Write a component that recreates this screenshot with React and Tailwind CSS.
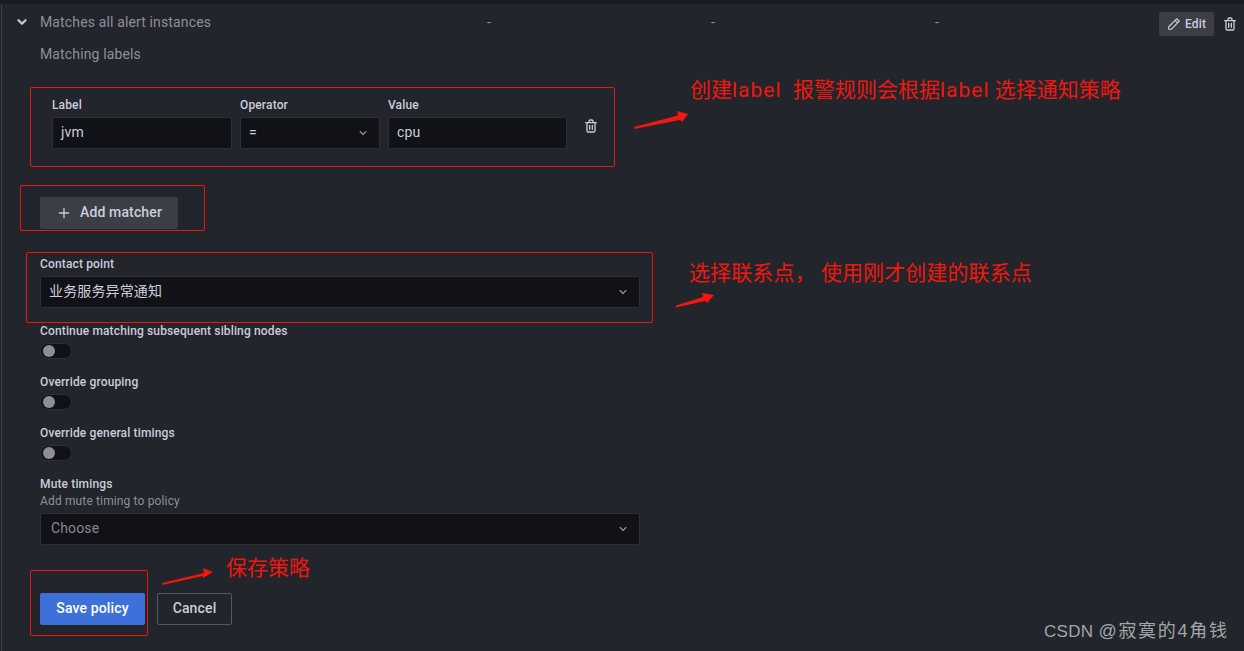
const TRASH = "M10,18a1,1,0,0,0,1-1V11a1,1,0,0,0-2,0v6A1,1,0,0,0,10,18ZM20,6H16V5a3,3,0,0,0-3-3H11A3,3,0,0,0,8,5V6H4A1,1,0,0,0,4,8H5V19a3,3,0,0,0,3,3h8a3,3,0,0,0,3-3V8h1a1,1,0,0,0,0-2ZM10,5a1,1,0,0,1,1-1h2a1,1,0,0,1,1,1V6H10Zm7,14a1,1,0,0,1-1,1H8a1,1,0,0,1-1-1V8H17Zm-3-1a1,1,0,0,0,1-1V11a1,1,0,0,0-2,0v6A1,1,0,0,0,14,18Z";
const PEN = "M22,7.24a1,1,0,0,0-.29-.71L17.47,2.29A1,1,0,0,0,16.76,2a1,1,0,0,0-.71.29L13.22,5.12h0L2.29,16.05a1,1,0,0,0-.29.71V21a1,1,0,0,0,1,1H7.24A1,1,0,0,0,8,21.71L18.87,10.78h0L21.71,8a1.19,1.19,0,0,0,.22-.33,1,1,0,0,0,0-.24.7.7,0,0,0,0-.14ZM6.83,20H4V17.17l9.93-9.93,2.83,2.83ZM18.17,8.66,15.34,5.83l1.42-1.41,2.82,2.82Z";
const ANGLE = "M17,9.17a1,1,0,0,0-1.41,0L12,12.71,8.46,9.17a1,1,0,0,0-1.41,0,1,1,0,0,0,0,1.42l4.24,4.24a1,1,0,0,0,1.42,0L17,10.59A1,1,0,0,0,17,9.17Z";
const PLUS = "M19,11H13V5a1,1,0,0,0-2,0v6H5a1,1,0,0,0,0,2h6v6a1,1,0,0,0,2,0V13h6a1,1,0,0,0,0-2Z";

function Icon({ d, className }) {
  return (
    <svg viewBox="0 0 24 24" fill="currentColor" className={className}>
      <path d={d} />
    </svg>
  );
}

function FieldLabel({ children, className = "" }) {
  return <div className={`h-4 text-xs leading-4 font-medium tracking-[0.14px] text-[#ccccdc] ${className}`}>{children}</div>;
}

function Input({ children, className = "" }) {
  return (
    <div className={`flex h-8 items-center border border-[#2d2f35] bg-[#111217] px-2 pb-[2px] text-sm tracking-[0.14px] text-[#ccccdc] rounded-[2px] ${className}`}>
      {children}
    </div>
  );
}

function Select({ children, className = "", muted = false }) {
  return (
    <div className={`flex h-8 items-center justify-between border border-[#2d2f35] bg-[#111217] pr-2 text-sm tracking-[0.14px] rounded-[2px] ${muted ? "pl-[10px] text-[rgba(204,204,220,0.65)]" : "pl-2 text-[#ccccdc]"} ${className}`}>
      <span className="pb-[2px]">{children}</span>
      <Icon d={ANGLE} className="h-4 w-4 text-[rgba(204,204,220,0.65)]" />
    </div>
  );
}

function Toggle() {
  return (
    <div className="mt-1 flex h-4 w-8 items-center rounded-full border border-[#2d2f35] bg-[#111217] pl-[2px]">
      <div className="h-3 w-3 rounded-full bg-[#8e8e9a]" />
    </div>
  );
}

function Box({ className }) {
  return <div className={`pointer-events-none absolute rounded-[2px] border border-[#f5140c] ${className}`} />;
}

function Note({ children, className }) {
  return <div className={`absolute whitespace-pre text-[21px] leading-7 font-normal text-[#f0170f] ${className}`}>{children}</div>;
}

export default function App() {
  return (
    <div className="relative h-[651px] w-[1244px] overflow-hidden bg-[#22252b] font-['Roboto','Noto_Sans_CJK_SC',sans-serif]">
      <div className="h-1 bg-[#181b1f]" />
      <div className="ml-px h-[647px] border-l border-[#3e4146]">
        <div className="flex h-9 items-center">
          <Icon d={ANGLE} className="ml-[10px] h-5 w-5 stroke-[#ccccdc] stroke-[0.8] text-[#ccccdc]" />
          <div className="ml-[8px] w-[447px] text-sm tracking-[0.14px] text-[rgba(204,204,220,0.65)]">Matches all alert instances</div>
          <div className="w-56 text-sm text-[rgba(204,204,220,0.65)]">-</div>
          <div className="w-56 text-sm text-[rgba(204,204,220,0.65)]">-</div>
          <div className="w-[224px] text-sm text-[rgba(204,204,220,0.65)]">-</div>
          <div className="mt-1 flex h-6 w-[55px] items-center justify-center gap-1 rounded-[2px] bg-[#3b3e45] text-xs font-medium tracking-[0.14px] text-[#ccccdc]">
            <Icon d={PEN} className="h-3.5 w-3.5" />
            Edit
          </div>
          <Icon d={TRASH} className="mt-1 ml-2 h-4 w-4 text-[#ccccdc]" />
        </div>

        <div className="pl-[38px]">
          <div className="mt-1 h-5 text-sm leading-5 tracking-[0.14px] text-[rgba(204,204,220,0.65)]">Matching labels</div>

          <div className="mt-[33px] flex gap-2 pl-3">
            <div className="w-[180px]">
              <FieldLabel>Label</FieldLabel>
              <Input className="mt-1">jvm</Input>
            </div>
            <div className="w-[140px]">
              <FieldLabel>Operator</FieldLabel>
              <Select className="mt-1">=</Select>
            </div>
            <div className="w-[179px]">
              <FieldLabel>Value</FieldLabel>
              <Input className="mt-1">cpu</Input>
            </div>
            <Icon d={TRASH} className="mt-[21px] ml-[8px] h-4 w-4 text-[#ccccdc]" />
          </div>

          <div className="mt-12 flex h-8 w-[138px] items-center justify-center gap-2 rounded-[2px] bg-[#3b3e45] text-sm font-medium tracking-[0.14px] text-[#ccccdc]">
            <Icon d={PLUS} className="h-4 w-4" />
            <span className="pb-[2px]">Add matcher</span>
          </div>

          <FieldLabel className="mt-[27px]">Contact point</FieldLabel>
          <Select className="mt-1 w-[600px]">业务服务异常通知</Select>

          <FieldLabel className="mt-[15px]">Continue matching subsequent sibling nodes</FieldLabel>
          <Toggle />
          <FieldLabel className="mt-[15px]">Override grouping</FieldLabel>
          <Toggle />
          <FieldLabel className="mt-[15px]">Override general timings</FieldLabel>
          <Toggle />

          <FieldLabel className="mt-[15px]">Mute timings</FieldLabel>
          <div className="mt-px h-4 text-xs leading-4 tracking-[0.14px] text-[rgba(204,204,220,0.65)]">Add mute timing to policy</div>
          <Select muted className="mt-1 w-[600px]">Choose</Select>

          <div className="mt-12 flex gap-3">
            <div className="flex h-8 w-[105px] items-center justify-center rounded-[2px] bg-[#3d71d9] pb-[2px] text-sm font-medium tracking-[0.14px] text-white">Save policy</div>
            <div className="flex h-8 w-[75px] items-center justify-center rounded-[2px] border border-[rgba(204,204,220,0.3)] pb-[2px] text-sm font-medium tracking-[0.14px] text-[#ccccdc]">Cancel</div>
          </div>
        </div>
      </div>

      <Box className="left-[30px] top-[87px] h-[80px] w-[585px]" />
      <Box className="left-[20px] top-[185px] h-[46px] w-[185px]" />
      <Box className="left-[26px] top-[252px] h-[71px] w-[627px]" />
      <Box className="left-[30px] top-[570px] h-[66px] w-[118px]" />

      <Note className="left-[690px] top-[76px]">创建<span className="tracking-[1px]">label</span><span className="tracking-[0.5px]">  </span>报警规则会根据<span className="tracking-[1px]">label</span> 选择通知策略</Note>
      <Note className="left-[689px] top-[259px] tracking-[0.1px]">选择联系点， 使用刚才创建的联系点</Note>
      <Note className="left-[226px] top-[554px]">保存策略</Note>

      <svg className="absolute left-0 top-0 h-[651px] w-[1244px]" viewBox="0 0 1244 651" fill="#f5170d">
        <polygon points="634,127 678,115.5 677,111 688,114 682,122 680,120 634,129" />
        <polygon points="676,305.5 703,297 702,293 714,295 707,303 705,301 676,307.5" />
        <polygon points="162,583 204,573 203,568 213,572 203,578 203,576 162,585" />
      </svg>

      <div className="absolute left-[1044px] top-[617px] whitespace-pre leading-6 font-['Liberation_Sans','Noto_Sans_CJK_SC',sans-serif] text-[#a3a5a8]"><span className="text-[17px] tracking-[0.3px]">CSDN </span><span className="text-lg tracking-[1.7px]">@寂寞的4角钱</span></div>
    </div>
  );
}
